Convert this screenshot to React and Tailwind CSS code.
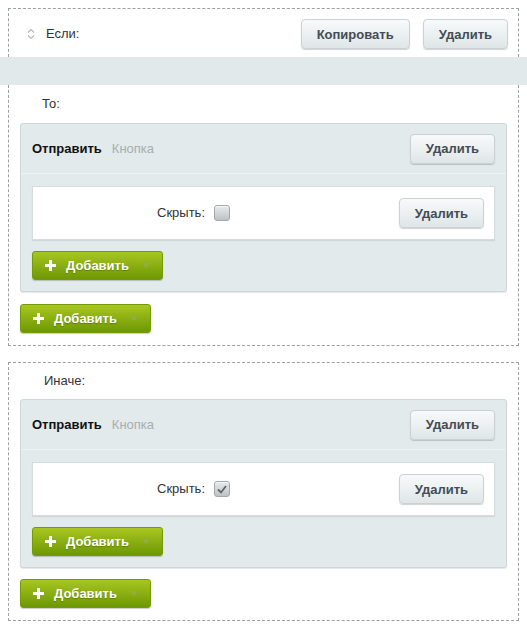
import React from "react";

function GrayButton({ children }) {
  return (
    <button className="h-[30px] px-[15px] rounded-[4px] border border-[#c9d1d4] bg-gradient-to-b from-[#f8fafa] to-[#dfe6e8] shadow-[0_1px_1px_rgba(0,0,0,0.18)] text-[13px] font-bold text-[#434c54] leading-none">
      {children}
    </button>
  );
}

function GreenButton() {
  return (
    <button className="h-[29px] w-[131px] flex items-center pl-[12px] pr-[12px] rounded-[3px] border border-[#739b05] bg-gradient-to-b from-[#a8c61f] to-[#6e9803] shadow-[0_1px_1px_rgba(0,0,0,0.2)] text-white text-[13px] font-bold leading-none">
      <svg width="11" height="11" viewBox="0 0 11 11" className="shrink-0">
        <rect x="4" y="0" width="3" height="11" fill="#ffffff" />
        <rect x="0" y="4" width="11" height="3" fill="#ffffff" />
      </svg>
      <span className="ml-[10px] [text-shadow:0_1px_1px_rgba(60,80,0,0.45)]">Добавить</span>
      <svg width="8" height="5" viewBox="0 0 8 5" className="ml-auto">
        <path d="M0 0 L8 0 L4 5 Z" fill="#93ad45" />
      </svg>
    </button>
  );
}

function Checkbox({ checked }) {
  return (
    <span className="w-[16px] h-[16px] rounded-[3px] border border-[#a2a8ab] bg-gradient-to-b from-[#e8ebec] to-[#bdc2c5] flex items-center justify-center shadow-[inset_0_1px_0_rgba(255,255,255,0.6)]">
      {checked && (
        <svg width="10" height="9" viewBox="0 0 10 9">
          <path d="M1 4.5 L4 7.5 L9 1" stroke="#5f666a" strokeWidth="1.8" fill="none" />
        </svg>
      )}
    </span>
  );
}

function Panel({ checked }) {
  return (
    <div className="mx-[11px] rounded-[3px] border border-[#cdd6d9] bg-[#e3eaec] shadow-[0_1px_1px_rgba(0,0,0,0.1)]">
      <div className="h-[50px] flex items-center pl-[11px] pr-[11px] border-b border-[#edf2f3]">
        <span className="text-[13px] font-bold text-[#111]">Отправить</span>
        <span className="ml-[10px] text-[13px] text-[#a7adb0]">Кнопка</span>
        <div className="ml-auto">
          <GrayButton>Удалить</GrayButton>
        </div>
      </div>
      <div className="px-[11px] pt-[12px] pb-[11px]">
        <div className="h-[54px] flex items-center bg-white border border-[#d4dcde] shadow-[0_1px_1px_rgba(0,0,0,0.08)] pr-[10px]">
          <span className="w-[172px] text-right text-[13px] text-[#333]">Скрыть:</span>
          <span className="ml-[9px]">
            <Checkbox checked={checked} />
          </span>
          <div className="ml-auto">
            <GrayButton>Удалить</GrayButton>
          </div>
        </div>
        <div className="mt-[11px]">
          <GreenButton />
        </div>
      </div>
    </div>
  );
}

function Chevron() {
  return (
    <svg width="8" height="12" viewBox="0 0 8 12">
      <path d="M1 4.5 L4 1.5 L7 4.5" stroke="#b3b8bb" strokeWidth="1.2" fill="none" />
      <path d="M1 7.5 L4 10.5 L7 7.5" stroke="#b3b8bb" strokeWidth="1.2" fill="none" />
    </svg>
  );
}

export default function App() {
  return (
    <div className="w-[527px] pt-[8px] pb-[8px] bg-white font-['Liberation_Sans',Arial,sans-serif]">
      <div className="mx-[8px] border-t border-l border-r border-dashed border-[#9aa0a4] pt-[10px] pb-[8px] pl-[18px] pr-[10px]">
        <div className="flex items-center h-[30px]">
          <Chevron />
          <span className="ml-[11px] text-[13px] text-[#333]">Если:</span>
          <div className="ml-auto flex gap-[13px]">
            <GrayButton>Копировать</GrayButton>
            <GrayButton>Удалить</GrayButton>
          </div>
        </div>
      </div>
      <div className="h-[28px] bg-[#e1e9eb]" />
      <div className="mx-[8px] border-b border-l border-r border-dashed border-[#9aa0a4] pb-[12px]">
        <div className="h-[38px] flex items-center pl-[33px] text-[13px] text-[#333]">То:</div>
        <Panel checked={false} />
        <div className="mt-[12px] ml-[11px]">
          <GreenButton />
        </div>
      </div>
      <div className="mt-[16px] mx-[8px] border border-dashed border-[#9aa0a4] pb-[12px]">
        <div className="h-[36px] flex items-center pl-[35px] text-[13px] text-[#333]">Иначе:</div>
        <Panel checked={true} />
        <div className="mt-[11px] ml-[11px]">
          <GreenButton />
        </div>
      </div>
    </div>
  );
}
